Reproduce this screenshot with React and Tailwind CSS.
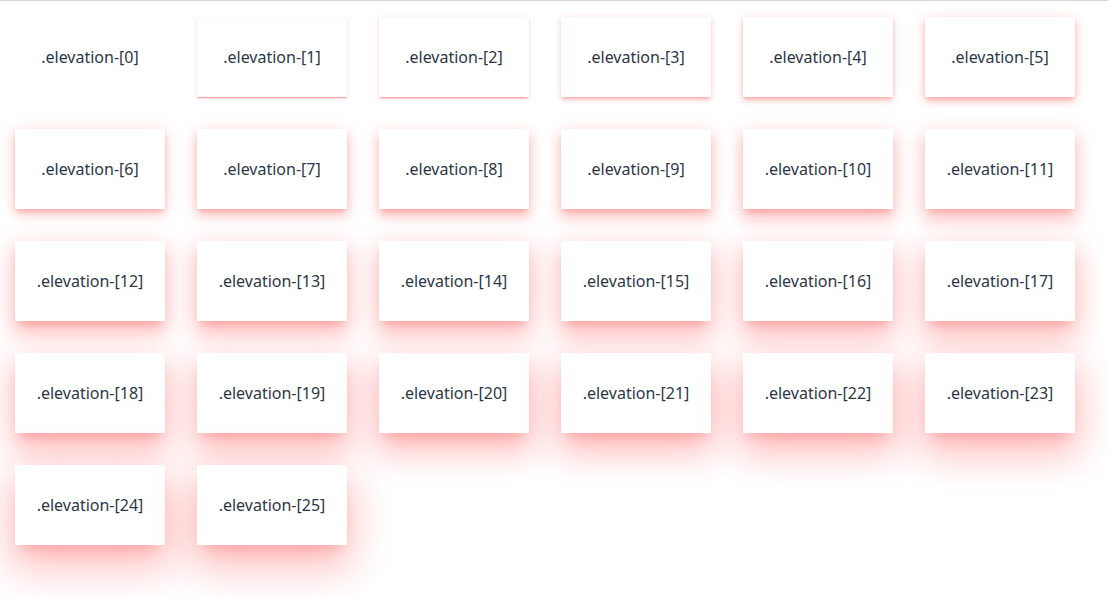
const SHADOWS = [
  'shadow-none',
  'shadow-[0px_2px_1px_-1px_rgba(255,0,0,0.2),0px_1px_1px_0px_rgba(255,0,0,0.14),0px_1px_3px_0px_rgba(255,0,0,0.12)]',
  'shadow-[0px_3px_1px_-2px_rgba(255,0,0,0.2),0px_2px_2px_0px_rgba(255,0,0,0.14),0px_1px_5px_0px_rgba(255,0,0,0.12)]',
  'shadow-[0px_3px_3px_-2px_rgba(255,0,0,0.2),0px_3px_4px_0px_rgba(255,0,0,0.14),0px_1px_8px_0px_rgba(255,0,0,0.12)]',
  'shadow-[0px_2px_4px_-1px_rgba(255,0,0,0.2),0px_4px_5px_0px_rgba(255,0,0,0.14),0px_1px_10px_0px_rgba(255,0,0,0.12)]',
  'shadow-[0px_3px_5px_-1px_rgba(255,0,0,0.2),0px_5px_8px_0px_rgba(255,0,0,0.14),0px_1px_14px_0px_rgba(255,0,0,0.12)]',
  'shadow-[0px_3px_5px_-1px_rgba(255,0,0,0.2),0px_6px_10px_0px_rgba(255,0,0,0.14),0px_1px_18px_0px_rgba(255,0,0,0.12)]',
  'shadow-[0px_4px_5px_-2px_rgba(255,0,0,0.2),0px_7px_10px_1px_rgba(255,0,0,0.14),0px_2px_16px_1px_rgba(255,0,0,0.12)]',
  'shadow-[0px_5px_5px_-3px_rgba(255,0,0,0.2),0px_8px_10px_1px_rgba(255,0,0,0.14),0px_3px_14px_2px_rgba(255,0,0,0.12)]',
  'shadow-[0px_5px_6px_-3px_rgba(255,0,0,0.2),0px_9px_12px_1px_rgba(255,0,0,0.14),0px_3px_16px_2px_rgba(255,0,0,0.12)]',
  'shadow-[0px_6px_6px_-3px_rgba(255,0,0,0.2),0px_10px_14px_1px_rgba(255,0,0,0.14),0px_4px_18px_3px_rgba(255,0,0,0.12)]',
  'shadow-[0px_6px_7px_-4px_rgba(255,0,0,0.2),0px_11px_15px_1px_rgba(255,0,0,0.14),0px_4px_20px_3px_rgba(255,0,0,0.12)]',
  'shadow-[0px_7px_8px_-4px_rgba(255,0,0,0.2),0px_12px_17px_2px_rgba(255,0,0,0.14),0px_5px_22px_4px_rgba(255,0,0,0.12)]',
  'shadow-[0px_7px_8px_-4px_rgba(255,0,0,0.2),0px_13px_19px_2px_rgba(255,0,0,0.14),0px_5px_24px_4px_rgba(255,0,0,0.12)]',
  'shadow-[0px_7px_9px_-4px_rgba(255,0,0,0.2),0px_14px_21px_2px_rgba(255,0,0,0.14),0px_5px_26px_4px_rgba(255,0,0,0.12)]',
  'shadow-[0px_8px_9px_-5px_rgba(255,0,0,0.2),0px_15px_22px_2px_rgba(255,0,0,0.14),0px_6px_28px_5px_rgba(255,0,0,0.12)]',
  'shadow-[0px_8px_10px_-5px_rgba(255,0,0,0.2),0px_16px_24px_2px_rgba(255,0,0,0.14),0px_6px_30px_5px_rgba(255,0,0,0.12)]',
  'shadow-[0px_8px_11px_-5px_rgba(255,0,0,0.2),0px_17px_26px_2px_rgba(255,0,0,0.14),0px_6px_32px_5px_rgba(255,0,0,0.12)]',
  'shadow-[0px_9px_11px_-5px_rgba(255,0,0,0.2),0px_18px_28px_2px_rgba(255,0,0,0.14),0px_7px_34px_6px_rgba(255,0,0,0.12)]',
  'shadow-[0px_9px_12px_-6px_rgba(255,0,0,0.2),0px_19px_29px_2px_rgba(255,0,0,0.14),0px_7px_36px_6px_rgba(255,0,0,0.12)]',
  'shadow-[0px_10px_13px_-6px_rgba(255,0,0,0.2),0px_20px_31px_3px_rgba(255,0,0,0.14),0px_8px_38px_7px_rgba(255,0,0,0.12)]',
  'shadow-[0px_10px_13px_-6px_rgba(255,0,0,0.2),0px_21px_33px_3px_rgba(255,0,0,0.14),0px_8px_40px_7px_rgba(255,0,0,0.12)]',
  'shadow-[0px_10px_14px_-6px_rgba(255,0,0,0.2),0px_22px_35px_3px_rgba(255,0,0,0.14),0px_8px_42px_7px_rgba(255,0,0,0.12)]',
  'shadow-[0px_11px_14px_-7px_rgba(255,0,0,0.2),0px_23px_36px_3px_rgba(255,0,0,0.14),0px_9px_44px_8px_rgba(255,0,0,0.12)]',
  'shadow-[0px_11px_15px_-7px_rgba(255,0,0,0.2),0px_24px_38px_3px_rgba(255,0,0,0.14),0px_9px_46px_8px_rgba(255,0,0,0.12)]',
  'shadow-[0px_11px_15px_-7px_rgba(255,0,0,0.2),0px_24px_38px_3px_rgba(255,0,0,0.14),0px_9px_46px_8px_rgba(255,0,0,0.12)]',
]

function Card({ level }) {
  return (
    <div className={`flex h-20 w-[150px] items-center justify-center bg-white text-base text-[#2d3748] ${SHADOWS[level]}`}>
      .elevation-[{level}]
    </div>
  )
}

export default function App() {
  return (
    <div className="min-h-[598px] border-t border-gray-300 bg-white font-['Noto_Sans','Open_Sans',sans-serif]">
      <div className="grid grid-cols-[repeat(6,150px)] gap-8 pl-[15px] pt-4">
        {SHADOWS.map((_, i) => <Card key={i} level={i} />)}
      </div>
    </div>
  )
}
